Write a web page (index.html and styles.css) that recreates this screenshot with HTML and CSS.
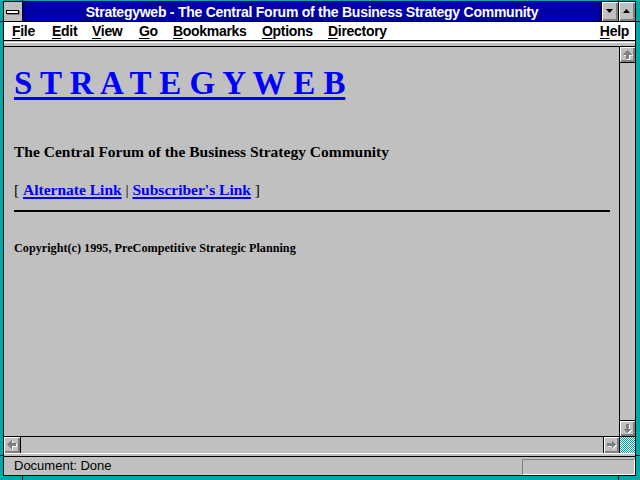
FILE: index.html
```html
<!DOCTYPE html>
<html>
<head>
<meta charset="utf-8">
<title>Strategyweb</title>
<link rel="stylesheet" href="styles.css">
</head>
<body>
<div class="frame">
  <span class="notch n-top1"></span><span class="notch n-top2"></span>
  <span class="notch n-bot1"></span><span class="notch n-bot2"></span>
  <span class="notch n-left1"></span><span class="notch n-left2"></span>
  <span class="notch n-right1"></span><span class="notch n-right2"></span>
  <div class="win">
    <div class="titlebar">
      <div class="sysbox"><span class="sysbar"></span></div>
      <div class="title">Strategyweb - The Central Forum of the Business Strategy Community</div>
      <div class="tbtn"><svg width="7" height="4" viewBox="0 0 7 4"><polygon points="0,0 7,0 3.5,4" fill="#000"/></svg></div>
      <div class="tbtn"><svg width="7" height="4" viewBox="0 0 7 4"><polygon points="0,4 7,4 3.5,0" fill="#000"/></svg></div>
    </div>
    <div class="menubar">
      <span class="mi w-file"><u>F</u>ile</span>
      <span class="mi w-edit"><u>E</u>dit</span>
      <span class="mi w-view"><u>V</u>iew</span>
      <span class="mi w-go"><u>G</u>o</span>
      <span class="mi w-book"><u>B</u>ookmarks</span>
      <span class="mi w-opt"><u>O</u>ptions</span>
      <span class="mi"><u>D</u>irectory</span>
      <span class="mi help"><u>H</u>elp</span>
    </div>
    <div class="toolsep"></div>
    <div class="main">
      <div class="viewport">
        <div class="content">
          <h1 class="logo"><a href="#">S T R A T E G Y W E B</a></h1>
          <p class="tag">The Central Forum of the Business Strategy Community</p>
          <p class="links">[ <a href="#">Alternate Link</a> | <a href="#">Subscriber's Link</a> ]</p>
          <hr class="rule">
          <p class="copy">Copyright(c) 1995, PreCompetitive Strategic Planning</p>
        </div>
        <div class="vscroll">
          <div class="sbtn sb-up"><svg width="15" height="15" viewBox="0 0 15 15"><polygon points="8.5,4 13,8.5 10,8.5 10,13 7,13 7,8.5 4,8.5" fill="#fff"/><polygon points="7.5,3 12,7.5 9,7.5 9,12 6,12 6,7.5 3,7.5" fill="#808080"/></svg></div>
          <div class="strack"></div>
          <div class="sbtn sb-down"><svg width="15" height="15" viewBox="0 0 15 15"><polygon points="8.5,13 13,8.5 10,8.5 10,4 7,4 7,8.5 4,8.5" fill="#fff"/><polygon points="7.5,12 12,7.5 9,7.5 9,3 6,3 6,7.5 3,7.5" fill="#808080"/></svg></div>
        </div>
      </div>
      <div class="hscroll">
        <div class="sbtn sb-left"><svg width="15" height="15" viewBox="0 0 15 15"><polygon points="4,8.5 8.5,4 8.5,7 13,7 13,10 8.5,10 8.5,13" fill="#fff"/><polygon points="3,7.5 7.5,3 7.5,6 12,6 12,9 7.5,9 7.5,12" fill="#808080"/></svg></div>
        <div class="htrack"></div>
        <div class="sbtn sb-right"><svg width="15" height="15" viewBox="0 0 15 15"><polygon points="13,8.5 8.5,4 8.5,7 4,7 4,10 8.5,10 8.5,13" fill="#fff"/><polygon points="12,7.5 7.5,3 7.5,6 3,6 3,9 7.5,9 7.5,12" fill="#808080"/></svg></div>
        <div class="corner"></div>
      </div>
    </div>
    <div class="hsep"></div>
    <div class="status">
      <span class="stext">Document: Done</span>
      <span class="progress"></span>
    </div>
  </div>
</div>
</body>
</html>
```

FILE: styles.css
```css
* { box-sizing: border-box; }
html, body { margin: 0; padding: 0; }
body {
  width: 640px;
  height: 480px;
  overflow: hidden;
  background: #00a8a8;
  font-family: "Liberation Sans", Arial, sans-serif;
}
.frame {
  position: relative;
  width: 640px;
  height: 480px;
  padding: 1px 4px 4px 3px;
  background: #00a8a8;
}
.notch { position: absolute; background: #000; }
.n-top1 { left: 22px; top: 0; width: 1px; height: 1px; }
.n-top2 { left: 618px; top: 0; width: 1px; height: 1px; }
.n-bot1 { left: 22px; bottom: 0; width: 1px; height: 4px; }
.n-bot2 { left: 618px; bottom: 0; width: 1px; height: 4px; }
.n-left1 { left: 0; top: 21px; width: 3px; height: 1px; }
.n-left2 { left: 0; top: 455px; width: 3px; height: 1px; }
.n-right1 { right: 0; top: 21px; width: 4px; height: 1px; }
.n-right2 { right: 0; top: 455px; width: 4px; height: 1px; }

.win {
  height: 100%;
  border: 1px solid #000;
  display: flex;
  flex-direction: column;
  background: #c0c0c0;
}

/* title bar */
.titlebar {
  display: flex;
  height: 20px;
  border-bottom: 1px solid #000;
  flex: none;
}
.sysbox {
  width: 19px;
  border-right: 1px solid #000;
  background: #c0c0c0;
  display: flex;
  align-items: center;
  justify-content: center;
}
.sysbar {
  display: block;
  width: 13px;
  height: 4px;
  border: 1px solid #000;
  background: #fff;
  box-shadow: 1px 1px 0 #808080;
  margin: 1px 1px 0 0;
}
.title {
  flex: 1;
  background: #0000a8;
  color: #fff;
  font-weight: bold;
  font-size: 14px;
  letter-spacing: -0.25px;
  line-height: 17px;
  padding-top: 2px;
  text-align: center;
  white-space: nowrap;
  overflow: hidden;
}
.tbtn {
  width: 17px;
  border-left: 1px solid #000;
  background: #c0c0c0;
  box-shadow: inset 1px 1px 0 #fff, inset -1px -1px 0 #808080, inset -2px -2px 0 #808080;
  display: flex;
  align-items: center;
  justify-content: center;
  padding: 0 1px 1px 0;
}
.tbtn svg { display: block; }

/* menu */
.menubar {
  display: flex;
  height: 19px;
  border-bottom: 1px solid #000;
  background: #fff;
  padding: 0 6px 0 8px;
  font-weight: bold;
  font-size: 14px;
  letter-spacing: -0.3px;
  line-height: 18px;
  color: #000;
  flex: none;
  white-space: nowrap;
}
.menubar u { text-decoration-thickness: 1px; text-underline-offset: 2px; }
.w-file { width: 40px; }
.w-edit { width: 40px; }
.w-view { width: 47px; }
.w-go { width: 34px; }
.w-book { width: 89px; }
.w-opt { width: 66px; }
.help { margin-left: auto; }

.toolsep {
  height: 6px;
  flex: none;
  border-bottom: 1px solid #000;
  background: linear-gradient(#c0c0c0 0 1px, #fff 1px 2px, #c0c0c0 2px);
}

/* main area */
.main {
  flex: 1;
  display: flex;
  flex-direction: column;
  min-height: 0;
}
.viewport {
  flex: 1;
  display: flex;
  min-height: 0;
}
.content {
  flex: 1;
  padding: 18px 9px 0 10px;
  overflow: hidden;
  color: #000;
  font-family: "Liberation Serif", "Times New Roman", serif;
}
.content a { color: #0000ff; }
.logo {
  margin: 0;
  font-size: 33px;
  line-height: 36px;
  font-weight: bold;
  white-space: pre;
}
.logo a {
  text-decoration: underline;
  text-decoration-thickness: 3px;
  text-underline-offset: 3px;
}
.tag {
  margin: 42px 0 0;
  font-size: 15.5px;
  line-height: 18px;
  font-weight: bold;
}
.links {
  margin: 20px 0 0;
  font-size: 15.5px;
  line-height: 18px;
}
.links a {
  font-weight: bold;
  text-decoration: underline;
  text-decoration-thickness: 2px;
  text-underline-offset: 2px;
}
.rule {
  margin: 11px 0 0;
  border: 0;
  height: 2px;
  background: #000;
}
.copy {
  margin: 29px 0 0;
  font-size: 12.2px;
  line-height: 14px;
  font-weight: bold;
}

/* scrollbars */
.sbtn {
  background: #c0c0c0;
  box-shadow: inset 1px 1px 0 #fff, inset -1px -1px 0 #808080, inset -2px -2px 0 #808080;
  flex: none;
}
.sbtn svg { display: block; shape-rendering: crispEdges; }
.vscroll {
  width: 16px;
  border-left: 1px solid #000;
  display: flex;
  flex-direction: column;
  flex: none;
}
.sb-up { height: 16px; border-bottom: 1px solid #000; }
.sb-down { height: 16px; border-top: 1px solid #000; }
.strack { flex: 1; background: #c0c0c0; }
.hscroll {
  height: 17px;
  border-top: 1px solid #000;
  display: flex;
  flex: none;
}
.sb-left { width: 17px; border-right: 1px solid #000; }
.htrack { flex: 1; background: #c0c0c0; }
.sb-right { width: 16px; border-left: 1px solid #000; }
.corner {
  width: 16px;
  border-left: 1px solid #000;
  background-color: #00a8a8;
  background-image: conic-gradient(#00a8a8 25%, #fff 0 50%, #00a8a8 0 75%, #fff 0);
  background-size: 2px 2px;
}
.hsep {
  height: 4px;
  flex: none;
  border-bottom: 1px solid #000;
  background: linear-gradient(#fff 0 1px, #c0c0c0 1px);
}

/* status */
.status {
  height: 18px;
  flex: none;
  display: flex;
  padding-left: 10px;
  font-size: 13px;
  line-height: 18px;
  color: #000;
}
.progress {
  margin-left: auto;
  align-self: flex-end;
  width: 113px;
  height: 16px;
  border-top: 1px solid #808080;
  border-left: 1px solid #808080;
  border-bottom: 1px solid #fff;
  border-right: 1px solid #fff;
}
```
